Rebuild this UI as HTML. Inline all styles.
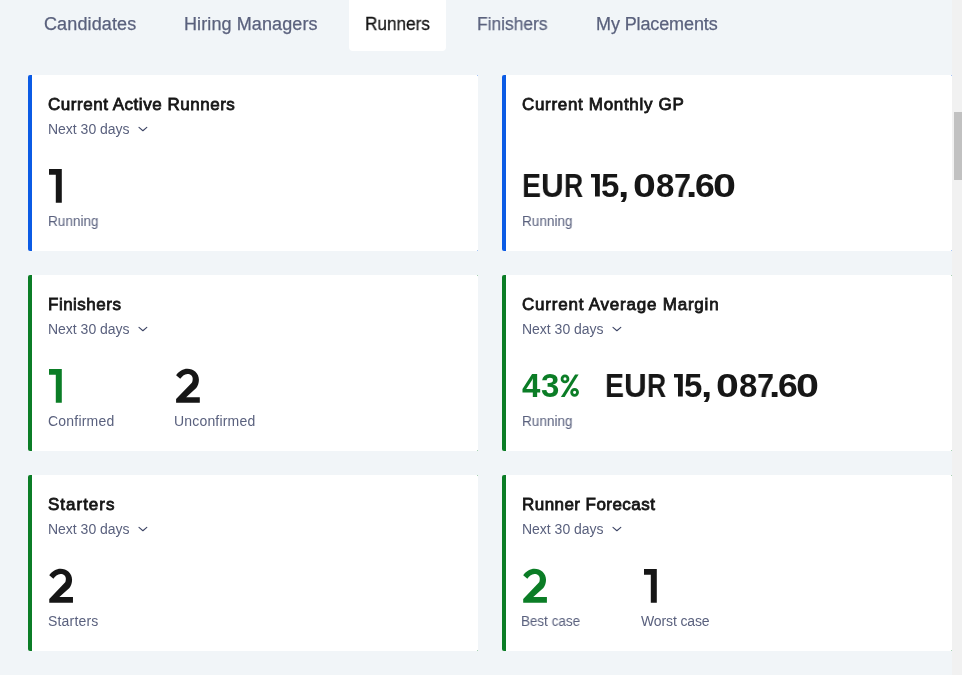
<!DOCTYPE html>
<html><head><meta charset="utf-8"><style>
html,body{margin:0;padding:0;}
body{width:962px;height:675px;overflow:hidden;background:#f1f5f8;position:relative;font-family:"Liberation Sans",sans-serif;}
.t{position:absolute;white-space:nowrap;line-height:1;transform-origin:0 0;will-change:transform;}
.abs{position:absolute;}
.tabbg{position:absolute;background:#fff;border-radius:4px;}
.card{position:absolute;width:446px;height:176px;background:#fff;border:0 solid;border-left-width:4px;border-radius:2px 1px 1px 2px;}
.track{position:absolute;left:952px;top:0;width:10px;height:675px;background:#f1f1f1;}
.thumb{position:absolute;left:954px;top:112px;width:8px;height:68px;background:#c1c1c1;}
</style></head><body>
<div class="tabbg" style="left:349px;top:-6px;width:97px;height:57px"></div>
<div class="card" style="left:28px;top:75px;border-color:#0b5be5"></div>
<div class="abs" style="left:477px;top:75px;width:1px;height:1px;background:#0b5be5;opacity:.35"></div>
<div class="abs" style="left:477px;top:250px;width:1px;height:1px;background:#0b5be5;opacity:.35"></div>
<div class="card" style="left:502px;top:75px;border-color:#0b5be5"></div>
<div class="abs" style="left:951px;top:75px;width:1px;height:1px;background:#0b5be5;opacity:.35"></div>
<div class="abs" style="left:951px;top:250px;width:1px;height:1px;background:#0b5be5;opacity:.35"></div>
<div class="card" style="left:28px;top:275px;border-color:#0b7d26"></div>
<div class="abs" style="left:477px;top:275px;width:1px;height:1px;background:#0b7d26;opacity:.35"></div>
<div class="abs" style="left:477px;top:450px;width:1px;height:1px;background:#0b7d26;opacity:.35"></div>
<div class="card" style="left:502px;top:275px;border-color:#0b7d26"></div>
<div class="abs" style="left:951px;top:275px;width:1px;height:1px;background:#0b7d26;opacity:.35"></div>
<div class="abs" style="left:951px;top:450px;width:1px;height:1px;background:#0b7d26;opacity:.35"></div>
<div class="card" style="left:28px;top:475px;border-color:#0b7d26"></div>
<div class="abs" style="left:477px;top:475px;width:1px;height:1px;background:#0b7d26;opacity:.35"></div>
<div class="abs" style="left:477px;top:650px;width:1px;height:1px;background:#0b7d26;opacity:.35"></div>
<div class="card" style="left:502px;top:475px;border-color:#0b7d26"></div>
<div class="abs" style="left:951px;top:475px;width:1px;height:1px;background:#0b7d26;opacity:.35"></div>
<div class="abs" style="left:951px;top:650px;width:1px;height:1px;background:#0b7d26;opacity:.35"></div>
<div class="t" style="left:43.70px;top:14.76px;font-size:18px;font-weight:400;color:#5a617d;letter-spacing:0.120px;-webkit-text-stroke:0.25px #5a617d;">Candidates</div>
<div class="t" style="left:183.72px;top:14.76px;font-size:18px;font-weight:400;color:#5a617d;letter-spacing:0.107px;-webkit-text-stroke:0.25px #5a617d;">Hiring Managers</div>
<div class="t" style="left:365.24px;top:14.76px;font-size:18px;font-weight:400;color:#141414;letter-spacing:0.000px;transform:scaleX(0.9546);-webkit-text-stroke:0.3px #141414;">Runners</div>
<div class="t" style="left:476.62px;top:14.76px;font-size:18px;font-weight:400;color:#5a617d;letter-spacing:0.000px;transform:scaleX(0.9657);-webkit-text-stroke:0.25px #5a617d;">Finishers</div>
<div class="t" style="left:595.52px;top:14.76px;font-size:18px;font-weight:400;color:#5a617d;letter-spacing:-0.115px;-webkit-text-stroke:0.25px #5a617d;">My Placements</div>
<div class="t" style="left:48.12px;top:95.61px;font-size:17px;font-weight:400;color:#161616;letter-spacing:0.529px;-webkit-text-stroke:0.8px #161616;">Current Active Runners</div>
<div class="t" style="left:48.16px;top:121.85px;font-size:14px;font-weight:400;color:#5a617e;letter-spacing:-0.013px;">Next 30 days</div>
<div class="t" style="left:522.08px;top:95.61px;font-size:17px;font-weight:400;color:#161616;letter-spacing:0.679px;-webkit-text-stroke:0.8px #161616;">Current Monthly GP</div>
<div class="t" style="left:47.58px;top:295.61px;font-size:17px;font-weight:400;color:#161616;letter-spacing:0.495px;-webkit-text-stroke:0.8px #161616;">Finishers</div>
<div class="t" style="left:48.16px;top:321.85px;font-size:14px;font-weight:400;color:#5a617e;letter-spacing:-0.013px;">Next 30 days</div>
<div class="t" style="left:522.12px;top:295.61px;font-size:17px;font-weight:400;color:#161616;letter-spacing:0.782px;-webkit-text-stroke:0.8px #161616;">Current Average Margin</div>
<div class="t" style="left:522.16px;top:321.85px;font-size:14px;font-weight:400;color:#5a617e;letter-spacing:-0.013px;">Next 30 days</div>
<div class="t" style="left:48.02px;top:495.61px;font-size:17px;font-weight:400;color:#161616;letter-spacing:0.991px;-webkit-text-stroke:0.8px #161616;">Starters</div>
<div class="t" style="left:48.16px;top:521.85px;font-size:14px;font-weight:400;color:#5a617e;letter-spacing:-0.013px;">Next 30 days</div>
<div class="t" style="left:521.58px;top:495.61px;font-size:17px;font-weight:400;color:#161616;letter-spacing:0.448px;-webkit-text-stroke:0.8px #161616;">Runner Forecast</div>
<div class="t" style="left:522.16px;top:521.85px;font-size:14px;font-weight:400;color:#5a617e;letter-spacing:-0.013px;">Next 30 days</div>
<div class="t" style="left:48.16px;top:214.05px;font-size:14px;font-weight:400;color:#5a617e;letter-spacing:0.000px;transform:scaleX(0.9694);">Running</div>
<div class="t" style="left:522.16px;top:214.05px;font-size:14px;font-weight:400;color:#5a617e;letter-spacing:0.000px;transform:scaleX(0.9694);">Running</div>
<div class="t" style="left:47.60px;top:414.05px;font-size:14px;font-weight:400;color:#5a617e;letter-spacing:0.209px;">Confirmed</div>
<div class="t" style="left:174.20px;top:414.05px;font-size:14px;font-weight:400;color:#5a617e;letter-spacing:0.180px;">Unconfirmed</div>
<div class="t" style="left:522.26px;top:414.05px;font-size:14px;font-weight:400;color:#5a617e;letter-spacing:0.000px;transform:scaleX(0.9694);">Running</div>
<div class="t" style="left:48.44px;top:614.05px;font-size:14px;font-weight:400;color:#5a617e;letter-spacing:0.182px;">Starters</div>
<div class="t" style="left:520.96px;top:614.05px;font-size:14px;font-weight:400;color:#5a617e;letter-spacing:0.000px;transform:scaleX(0.9601);">Best case</div>
<div class="t" style="left:640.82px;top:614.05px;font-size:14px;font-weight:400;color:#5a617e;letter-spacing:-0.133px;">Worst case</div>
<svg class="abs" style="left:138px;top:125px" width="12" height="8" viewBox="0 0 12 8"><path d="M1.00 2.40 L4.90 5.70 L8.80 2.40" fill="none" stroke="#3d4565" stroke-width="1.15" stroke-linecap="round" stroke-linejoin="round"/></svg>
<svg class="abs" style="left:612px;top:325px" width="12" height="8" viewBox="0 0 12 8"><path d="M1.00 2.40 L4.90 5.70 L8.80 2.40" fill="none" stroke="#3d4565" stroke-width="1.15" stroke-linecap="round" stroke-linejoin="round"/></svg>
<svg class="abs" style="left:138px;top:325px" width="12" height="8" viewBox="0 0 12 8"><path d="M1.00 2.40 L4.90 5.70 L8.80 2.40" fill="none" stroke="#3d4565" stroke-width="1.15" stroke-linecap="round" stroke-linejoin="round"/></svg>
<svg class="abs" style="left:138px;top:525px" width="12" height="8" viewBox="0 0 12 8"><path d="M1.00 2.40 L4.90 5.70 L8.80 2.40" fill="none" stroke="#3d4565" stroke-width="1.15" stroke-linecap="round" stroke-linejoin="round"/></svg>
<svg class="abs" style="left:612px;top:525px" width="12" height="8" viewBox="0 0 12 8"><path d="M1.00 2.40 L4.90 5.70 L8.80 2.40" fill="none" stroke="#3d4565" stroke-width="1.15" stroke-linecap="round" stroke-linejoin="round"/></svg>
<div class="t" style="left:521.97px;top:168.97px;font-size:33px;font-weight:700;color:#161616;transform:scaleX(0.8653)">E</div>
<div class="t" style="left:540.73px;top:168.97px;font-size:33px;font-weight:700;color:#161616;transform:scaleX(0.9565)">U</div>
<div class="t" style="left:564.42px;top:168.97px;font-size:33px;font-weight:700;color:#161616;transform:scaleX(0.8008)">R</div>
<svg class="abs" style="left:591.10px;top:174.40px" width="8.80" height="22.5" viewBox="0 0 8.80 22.5"><path d="M0 0 H8.80 V22.5 H4.00 V3.6 H0 Z" fill="#161616"/></svg>
<div class="t" style="left:601.46px;top:168.97px;font-size:33px;font-weight:700;color:#161616;transform:scaleX(0.9872)">5</div>
<div class="t" style="left:617.64px;top:168.97px;font-size:33px;font-weight:700;color:#161616;transform:scaleX(1.2338)">&#44;</div>
<div class="t" style="left:633.33px;top:168.97px;font-size:33px;font-weight:700;color:#161616;transform:scaleX(1.2434)">0</div>
<div class="t" style="left:655.59px;top:168.97px;font-size:33px;font-weight:700;color:#161616;transform:scaleX(0.9914)">8</div>
<div class="t" style="left:673.67px;top:168.97px;font-size:33px;font-weight:700;color:#161616;transform:scaleX(0.9244)">7</div>
<div class="t" style="left:686.49px;top:168.97px;font-size:33px;font-weight:700;color:#161616;transform:scaleX(1.2365)">.</div>
<div class="t" style="left:695.45px;top:168.97px;font-size:33px;font-weight:700;color:#161616;transform:scaleX(1.0795)">6</div>
<div class="t" style="left:713.32px;top:168.97px;font-size:33px;font-weight:700;color:#161616;transform:scaleX(1.2498)">0</div>
<div class="t" style="left:604.97px;top:368.97px;font-size:33px;font-weight:700;color:#161616;transform:scaleX(0.8653)">E</div>
<div class="t" style="left:623.73px;top:368.97px;font-size:33px;font-weight:700;color:#161616;transform:scaleX(0.9565)">U</div>
<div class="t" style="left:647.42px;top:368.97px;font-size:33px;font-weight:700;color:#161616;transform:scaleX(0.8008)">R</div>
<svg class="abs" style="left:674.10px;top:374.40px" width="8.80" height="22.5" viewBox="0 0 8.80 22.5"><path d="M0 0 H8.80 V22.5 H4.00 V3.6 H0 Z" fill="#161616"/></svg>
<div class="t" style="left:684.46px;top:368.97px;font-size:33px;font-weight:700;color:#161616;transform:scaleX(0.9872)">5</div>
<div class="t" style="left:700.64px;top:368.97px;font-size:33px;font-weight:700;color:#161616;transform:scaleX(1.2338)">&#44;</div>
<div class="t" style="left:716.33px;top:368.97px;font-size:33px;font-weight:700;color:#161616;transform:scaleX(1.2434)">0</div>
<div class="t" style="left:738.59px;top:368.97px;font-size:33px;font-weight:700;color:#161616;transform:scaleX(0.9914)">8</div>
<div class="t" style="left:756.67px;top:368.97px;font-size:33px;font-weight:700;color:#161616;transform:scaleX(0.9244)">7</div>
<div class="t" style="left:769.49px;top:368.97px;font-size:33px;font-weight:700;color:#161616;transform:scaleX(1.2365)">.</div>
<div class="t" style="left:778.45px;top:368.97px;font-size:33px;font-weight:700;color:#161616;transform:scaleX(1.0795)">6</div>
<div class="t" style="left:796.32px;top:368.97px;font-size:33px;font-weight:700;color:#161616;transform:scaleX(1.2498)">0</div>
<div class="t" style="left:522.20px;top:368.97px;font-size:33px;font-weight:700;color:#0b7d26;transform:scaleX(0.9912)">4</div>
<div class="t" style="left:540.95px;top:368.97px;font-size:33px;font-weight:700;color:#0b7d26;transform:scaleX(0.9984)">3</div>
<svg class="abs" style="left:555px;top:370px" width="30" height="30" viewBox="0 0 30 30"><circle cx="10.00" cy="8.90" r="2.95" fill="none" stroke="#0b7d26" stroke-width="2.8"/><circle cx="19.60" cy="22.35" r="2.95" fill="none" stroke="#0b7d26" stroke-width="2.8"/><path d="M20.10 4.40 H23.60 L9.60 26.90 H5.90 Z" fill="#0b7d26"/></svg>
<svg class="abs" style="left:176px;top:368px" width="26" height="36" viewBox="0 0 26 36"><path transform="translate(0.10 0.77)" d="M0 6.52 C2.8 2.6 7 0 11.26 0 C17.5 0 22.82 4.6 22.82 10.96 C22.82 14 21.8 17.3 20.15 19.26 L10.08 28.45 L23.71 28.45 L23.71 34.08 L0 34.08 L0 30.23 L15.71 13.93 C16.3 13.2 16.6 11.5 16.6 10.07 C16.6 7.2 14.4 5.33 11.26 5.33 C8.3 5.33 5.8 8.0 4.15 10.07 Z" fill="#161616"/></svg>
<svg class="abs" style="left:49px;top:568px" width="26" height="36" viewBox="0 0 26 36"><path transform="translate(0.26 0.67)" d="M0 6.52 C2.8 2.6 7 0 11.26 0 C17.5 0 22.82 4.6 22.82 10.96 C22.82 14 21.8 17.3 20.15 19.26 L10.08 28.45 L23.71 28.45 L23.71 34.08 L0 34.08 L0 30.23 L15.71 13.93 C16.3 13.2 16.6 11.5 16.6 10.07 C16.6 7.2 14.4 5.33 11.26 5.33 C8.3 5.33 5.8 8.0 4.15 10.07 Z" fill="#161616"/></svg>
<svg class="abs" style="left:523px;top:568px" width="26" height="36" viewBox="0 0 26 36"><path transform="translate(0.20 0.67)" d="M0 6.52 C2.8 2.6 7 0 11.26 0 C17.5 0 22.82 4.6 22.82 10.96 C22.82 14 21.8 17.3 20.15 19.26 L10.08 28.45 L23.71 28.45 L23.71 34.08 L0 34.08 L0 30.23 L15.71 13.93 C16.3 13.2 16.6 11.5 16.6 10.07 C16.6 7.2 14.4 5.33 11.26 5.33 C8.3 5.33 5.8 8.0 4.15 10.07 Z" fill="#0b7d26"/></svg>
<svg class="abs" style="left:49.1px;top:169.1px" width="14" height="35" viewBox="0 0 14 35"><path d="M0 0 H12.8 V33.7 H6.8 V5.7 H0 Z" fill="#161616"/></svg>
<svg class="abs" style="left:49.1px;top:369.4px" width="14" height="35" viewBox="0 0 14 35"><path d="M0 0 H12.8 V33.7 H6.8 V5.7 H0 Z" fill="#0b7d26"/></svg>
<svg class="abs" style="left:643.9px;top:569.1px" width="14" height="35" viewBox="0 0 14 35"><path d="M0 0 H12.8 V33.7 H6.8 V5.7 H0 Z" fill="#161616"/></svg>
<div class="track"></div><div class="thumb"></div>
</body></html>
